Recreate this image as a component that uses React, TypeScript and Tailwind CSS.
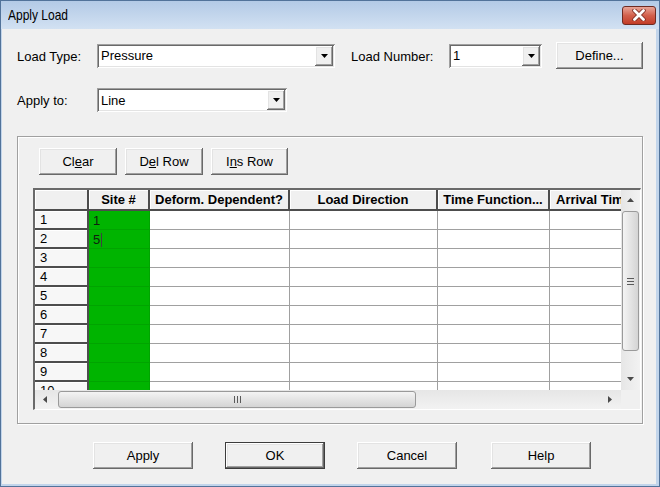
import type { ReactNode } from "react";

const RAISED =
  "shadow-[inset_-1px_-1px_0_#696969,inset_1px_1px_0_#ffffff,inset_-2px_-2px_0_#a0a0a0,inset_2px_2px_0_#e3e3e3]";
const SUNKEN =
  "shadow-[inset_1px_1px_0_#a0a0a0,inset_-1px_-1px_0_#ffffff,inset_2px_2px_0_#696969,inset_-2px_-2px_0_#e3e3e3]";

const COLS: { label: string; w: string; left?: boolean }[] = [
  { label: "Site #", w: "w-[61px]" },
  { label: "Deform. Dependent?", w: "w-[140px]" },
  { label: "Load Direction", w: "w-[148px]" },
  { label: "Time Function...", w: "w-[112px]" },
  { label: "Arrival Time", w: "w-[120px]", left: true },
];

const SITES = ["1", "5", "", "", "", "", "", "", "", ""];

function Tri({ dir, fill = "#4a4a4a" }: { dir: "up" | "down" | "left" | "right"; fill?: string }) {
  const v = dir === "up" || dir === "down";
  const pts = {
    up: "0,4 3.5,0 7,4",
    down: "0,0 7,0 3.5,4",
    left: "4,0 4,7 0,3.5",
    right: "0,0 4,3.5 0,7",
  }[dir];
  return (
    <svg width={v ? 7 : 4} height={v ? 4 : 7} viewBox={v ? "0 0 7 4" : "0 0 4 7"}>
      <polygon points={pts} fill={fill} />
    </svg>
  );
}

function Btn({ children, w, def }: { children: ReactNode; w: string; def?: boolean }) {
  return (
    <div
      className={`${w} flex h-[27px] shrink-0 items-center justify-center bg-[#f0f0f0] pt-px text-[13px] text-black ${
        def ? "border border-[#3c3c3c]" : ""
      } ${RAISED}`}
    >
      {children}
    </div>
  );
}

function Combo({ value, w }: { value: string; w: string }) {
  return (
    <div className={`${w} flex h-[24px] shrink-0 bg-white p-[2px] ${SUNKEN}`}>
      <div className="flex flex-1 items-center pl-[2px] pt-px text-[13px] text-black">{value}</div>
      <div className={`flex w-[18px] items-center justify-center bg-[#f0f0f0] ${RAISED}`}>
        <Tri dir="down" fill="#000" />
      </div>
    </div>
  );
}

function Grid() {
  return (
    <div className="ml-[15px] mt-[13px] flex h-[222px] w-[608px] flex-col border-t-2 border-l-2 border-r border-b border-t-[#6a6a6a] border-l-[#6a6a6a] border-r-white border-b-white">
      <div className="flex h-[200px]">
        <div className="w-[586px] overflow-hidden bg-white">
          <div className="flex">
            <div className="h-[21px] w-[54px] shrink-0 border-r-2 border-b-2 border-[#4d4d4d] bg-[#f0f0f0] shadow-[inset_1px_1px_0_#fff]" />
            {COLS.map((c) => (
              <div
                key={c.label}
                className={`${c.w} flex h-[21px] shrink-0 items-center whitespace-nowrap border-r-2 border-b-2 border-[#4d4d4d] bg-[#f0f0f0] pt-px text-[13px] font-bold text-black shadow-[inset_1px_1px_0_#fff] ${
                  c.left ? "justify-start pl-[6px]" : "justify-center"
                }`}
              >
                {c.label}
              </div>
            ))}
          </div>
          {SITES.map((s, i) => (
            <div key={i} className="flex">
              <div className="flex h-[19px] w-[54px] shrink-0 items-center border-r-2 border-b-2 border-[#4d4d4d] bg-[#f7f7f7] pl-[5px] pt-px text-[13px] text-black shadow-[inset_1px_1px_0_#fff]">
                {i + 1}
              </div>
              <div className="flex h-[19px] w-[61px] shrink-0 items-center border-r border-b border-[#00a400] bg-[#00b400] pl-[4px] pt-px text-[13px] text-[#102010]">
                {s}
                {i === 1 && <span className="ml-px inline-block h-[14px] w-px bg-[#404040]" />}
              </div>
              {COLS.slice(1).map((c) => (
                <div key={c.label} className={`${c.w} h-[19px] shrink-0 border-r border-b border-[#a0a0a0] bg-white`} />
              ))}
            </div>
          ))}
        </div>
        {/* vertical scrollbar */}
        <div className="flex w-[19px] flex-col bg-linear-to-r from-[#e6e6e6] to-[#f2f2f2]">
          <div className="flex h-[19px] items-center justify-center">
            <Tri dir="up" />
          </div>
          <div className="mx-[1px] mt-[2px] flex h-[140px] items-center justify-center rounded-[3px] border border-[#9a9a9a] bg-linear-to-r from-[#f4f4f4] to-[#d4d4d4]">
            <div className="flex flex-col gap-[2px]">
              <div className="h-px w-[7px] bg-[#5a5a5a]" />
              <div className="h-px w-[7px] bg-[#5a5a5a]" />
              <div className="h-px w-[7px] bg-[#5a5a5a]" />
            </div>
          </div>
          <div className="flex-1" />
          <div className="flex h-[22px] items-center justify-center">
            <Tri dir="down" />
          </div>
        </div>
      </div>
      <div className="flex h-[19px]">
        {/* horizontal scrollbar */}
        <div className="flex w-[586px] items-center bg-linear-to-b from-[#e6e6e6] to-[#f2f2f2]">
          <div className="flex h-full w-[19px] items-center justify-center">
            <Tri dir="left" />
          </div>
          <div className="ml-[4px] flex h-[17px] w-[358px] items-center justify-center rounded-[3px] border border-[#9a9a9a] bg-linear-to-b from-[#f4f4f4] to-[#d4d4d4]">
            <div className="flex gap-[2px]">
              <div className="h-[7px] w-px bg-[#5a5a5a]" />
              <div className="h-[7px] w-px bg-[#5a5a5a]" />
              <div className="h-[7px] w-px bg-[#5a5a5a]" />
            </div>
          </div>
          <div className="flex-1" />
          <div className="flex h-full w-[22px] items-center justify-center">
            <Tri dir="right" />
          </div>
        </div>
        <div className="w-[19px] bg-[#f0f0f0]" />
      </div>
    </div>
  );
}

export default function App() {
  return (
    <div className="flex h-[487px] w-[660px] flex-col border border-[#52739a] bg-[#c2d5eb] font-['Liberation_Sans',Arial,sans-serif] text-black">
      {/* title bar */}
      <div className="flex h-[28px] shrink-0 items-center justify-between bg-linear-to-b from-[#b3cae6] to-[#d2e1f2] pl-[7px] pr-[3px]">
        <span className="inline-block origin-left scale-x-[0.8] text-[15px] text-black">Apply Load</span>
        <div className="flex h-[19px] w-[34px] items-center justify-center rounded-[3px] border border-[#6e2b22] bg-linear-to-b from-[#e7a497] via-[#d2604c] to-[#c23b26]">
          <svg width="14" height="12" viewBox="0 0 14 12">
            <path d="M2.5 1.5 L11.5 10.5 M11.5 1.5 L2.5 10.5" stroke="#7a2a20" strokeWidth="4.4" strokeLinecap="round" />
            <path d="M2.5 1.5 L11.5 10.5 M11.5 1.5 L2.5 10.5" stroke="#ffffff" strokeWidth="2.8" strokeLinecap="round" />
          </svg>
        </div>
      </div>

      {/* client area */}
      <div className="mb-[2px] ml-px mr-[3px] flex flex-1 flex-col bg-[#f0f0f0] pl-[15px] text-[13px]">
        <div className="mt-[13px] flex h-[27px] items-center">
          <span className="w-[80px] shrink-0 pt-[2px]">Load Type:</span>
          <Combo value="Pressure" w="w-[238px]" />
          <span className="ml-[16px] w-[98px] shrink-0 pt-[2px]">Load Number:</span>
          <Combo value="1" w="w-[93px]" />
          <div className="ml-[14px]">
            <Btn w="w-[87px]">Define...</Btn>
          </div>
        </div>

        <div className="mt-[19px] flex h-[24px] items-center">
          <span className="w-[80px] shrink-0 pt-[2px]">Apply to:</span>
          <Combo value="Line" w="w-[190px]" />
        </div>

        <div className="mt-[24px] flex h-[288px] w-[626px] flex-col border border-[#a0a0a0] shadow-[1px_1px_0_#fff,inset_1px_1px_0_#fff]">
          <div className="mt-[11px] ml-[21px] flex gap-[8px]">
            <Btn w="w-[78px]">
              Cl<span className="underline">e</span>ar
            </Btn>
            <Btn w="w-[78px]">
              D<span className="underline">e</span>l Row
            </Btn>
            <Btn w="w-[77px]">
              I<span className="underline">n</span>s Row
            </Btn>
          </div>
          <Grid />
        </div>

        <div className="mt-[18px] flex">
          <div className="ml-[76px]">
            <Btn w="w-[100px]">Apply</Btn>
          </div>
          <div className="ml-[32px]">
            <Btn w="w-[100px]" def>
              OK
            </Btn>
          </div>
          <div className="ml-[32px]">
            <Btn w="w-[100px]">Cancel</Btn>
          </div>
          <div className="ml-[34px]">
            <Btn w="w-[100px]">Help</Btn>
          </div>
        </div>
      </div>
    </div>
  );
}
